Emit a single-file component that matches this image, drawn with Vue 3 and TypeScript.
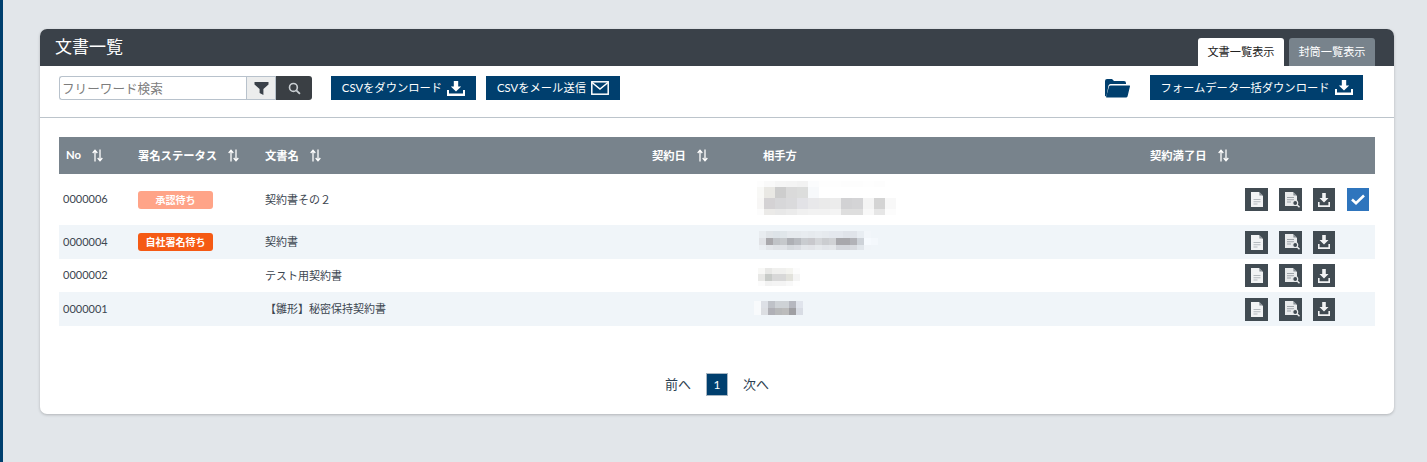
<template>
  <div class="page">
    <div class="side-bar"></div>
    <main class="main">
      <section class="card">
        <header class="card-head">
          <h1 class="title">文書一覧</h1>
          <div class="tabs">
            <a class="tab active">文書一覧表示</a>
            <a class="tab">封筒一覧表示</a>
          </div>
        </header>

        <div class="toolbar">
          <div class="search">
            <input class="search-input" type="text" placeholder="フリーワード検索" />
            <button class="addon filter" aria-label="絞り込み">
              <svg width="15" height="14" viewBox="0 0 15 14"><path d="M.5 1h14v2.400L9.400 8v6L5.600 12V8L.5 3.400z" fill="#3a4149" /></svg>
            </button>
            <button class="addon find" aria-label="検索">
              <svg width="13" height="13" viewBox="0 0 12 12"><circle cx="5" cy="5" r="3.600" fill="none" stroke="#c9ced2" stroke-width="1.500" /><path d="M7.700 7.700 11 11" stroke="#c9ced2" stroke-width="1.700" /></svg>
            </button>
          </div>
          <button class="btn first">
            <span class="btn-label">CSVをダウンロード</span>
            <svg class="btn-icon" width="18" height="15" viewBox="0 0 18 15"><path d="M6.800 0h4.400v5.500h3L9 10.400 3.800 5.500h3z" fill="#fff" /><path d="M0 9h2v3.500h14V9h2v6H0z" fill="#fff" /></svg>
          </button>
          <button class="btn mail">
            <span class="btn-label">CSVをメール送信</span>
            <svg class="btn-icon" width="18" height="14" viewBox="0 0 18 14"><rect x=".8" y=".8" width="16.400" height="12.400" fill="none" stroke="#fff" stroke-width="1.500" /><path d="M1 1.500 9 8l8-6.500" fill="none" stroke="#fff" stroke-width="1.500" /></svg>
          </button>
          <svg class="folder" width="26" height="20" viewBox="0 0 26 20"><path d="M1 18V3q0-2 2-2h5l2 2h10q2 0 2 2v1H6.500q-1.600 0-2 1.600L2.400 18.400z" fill="#003f6e" /><path d="M6.600 7.400H25.400q.8 0 .6.8l-2.400 10q-.3 1.300-1.600 1.300H2.800q-.9 0-.6-.9L5 8.600q.4-1.200 1.600-1.200z" fill="#003f6e" /></svg>
          <button class="btn form">
            <span class="btn-label">フォームデータ一括ダウンロード</span>
            <svg class="btn-icon" width="18" height="15" viewBox="0 0 18 15"><path d="M6.800 0h4.400v5.500h3L9 10.400 3.800 5.500h3z" fill="#fff" /><path d="M0 9h2v3.500h14V9h2v6H0z" fill="#fff" /></svg>
          </button>
        </div>

        <div class="table-wrap">
          <table class="doc-table">
            <colgroup>
              <col v-for="w in colWidths" :key="w.key" :style="{ width: w.px + 'px' }" />
            </colgroup>
            <thead>
              <tr>
                <th v-for="h in headers" :key="h.label">
                  <span class="th-inner">
                    <span class="th-label">{{ h.label }}</span>
                    <svg v-if="h.sort" class="sort" width="11" height="13" viewBox="0 0 11 13"><path d="M3 12.500V1.500M.7 4 3 1.200 5.300 4M8 .5v11M5.700 9 8 11.800 10.300 9" fill="none" stroke="#fff" stroke-width="1.300" /></svg>
                  </span>
                </th>
                <th></th>
              </tr>
            </thead>
            <tbody>
              <tr v-for="(row, i) in rows" :key="row.no" :class="{ alt: i % 2 === 1 }" :style="{ height: row.height + 'px' }">
                <td class="no">{{ row.no }}</td>
                <td class="status">
                  <span v-if="row.status" class="badge" :class="row.statusClass">{{ row.status }}</span>
                </td>
                <td class="name">{{ row.name }}</td>
                <td></td>
                <td class="partner">
                  <div class="mosaic" :style="{ marginTop: row.mosaic.top + 'px', marginLeft: row.mosaic.left + 'px' }">
                    <div v-for="(line, li) in row.mosaic.lines" :key="li" class="mosaic-line" :style="{ height: line.h + 'px' }">
                      <span
                        v-for="(c, ci) in line.cells"
                        :key="ci"
                        :style="{ width: (ci === 0 && row.mosaic.firstW ? row.mosaic.firstW : row.mosaic.cell) + 'px', background: c }"
                      ></span>
                    </div>
                  </div>
                </td>
                <td></td>
                <td class="actions">
                  <div class="icon-row">
                    <a class="icon-btn wide">
                      <svg width="12" height="15" viewBox="0 0 12 15"><path d="M0 0h8l4 4v11H0z" fill="#f2f3f4" /><path d="M8.400 0 12 3.600H8.400z" fill="#8a9197" /><path d="M2.500 7.500h7M2.500 9.800h7M2.500 12h4" stroke="#b4b9bd" stroke-width="1.100" /></svg>
                    </a>
                    <a class="icon-btn wide">
                      <svg class="preview" width="15" height="16" viewBox="0 0 15 16"><path d="M0 0h8l4 4v10H0z" fill="#e9ebec" /><path d="M8.400 0 12 3.600H8.400z" fill="#8a9197" /><path d="M2 5.500h7M2 7.800h7M2 10h4" stroke="#9ea4a9" stroke-width="1.100" /><circle cx="10.200" cy="11" r="2.500" fill="#414b52" stroke="#e9ebec" stroke-width="1.200" /><path d="M12 12.800 14.500 15.300" stroke="#e9ebec" stroke-width="1.500" /></svg>
                    </a>
                    <a class="icon-btn">
                      <svg width="12" height="14" viewBox="0 0 12 14"><path d="M4.200 0h3.600v5H10.500L6 9.500 1.500 5h2.700z" fill="#f2f3f4" /><path d="M0 9h1.600v3.200h8.800V9H12v5H0z" fill="#f2f3f4" /></svg>
                    </a>
                    <a v-if="row.checked" class="icon-btn check">
                      <svg width="14" height="11" viewBox="0 0 14 11"><path d="M1 5.500 5 9.200 13 1.500" fill="none" stroke="#fff" stroke-width="2.600" /></svg>
                    </a>
                  </div>
                </td>
              </tr>
            </tbody>
          </table>
        </div>

        <nav class="pager">
          <a class="pager-link">前へ</a>
          <span class="pager-current">1</span>
          <a class="pager-link">次へ</a>
        </nav>
      </section>
    </main>
  </div>
</template>

<script setup lang="ts">
interface MosaicLine {
  h: number;
  cells: string[];
}
interface Mosaic {
  top: number;
  left: number;
  cell: number;
  firstW?: number;
  lines: MosaicLine[];
}
interface DocRow {
  no: string;
  status: string;
  statusClass: string;
  name: string;
  height: number;
  checked: boolean;
  mosaic: Mosaic;
}

const colWidths = [
  { key: "no", px: 73 },
  { key: "status", px: 127 },
  { key: "name", px: 387 },
  { key: "date", px: 111 },
  { key: "partner", px: 387 },
  { key: "end", px: 96 },
  { key: "actions", px: 135 },
];

const headers = [
  { label: "No", sort: true },
  { label: "署名ステータス", sort: true },
  { label: "文書名", sort: true },
  { label: "契約日", sort: true },
  { label: "相手方", sort: false },
  { label: "契約満了日", sort: true },
];

const rows: DocRow[] = [
  {
    no: "0000006",
    status: "承認待ち",
    statusClass: "pending",
    name: "契約書その２",
    height: 51,
    checked: true,
    mosaic: {
      top: 7,
      left: 0,
      cell: 11,
      firstW: 7,
      lines: [
        { h: 6, cells: ["#fdfdfd", "#f9f9f9", "#f5f5f5", "#f4f4f4", "#f2f2f2", "#fbfcfd", "#fefefe", "#fefefe", "#fdfdfd", "#fdfdfd", "#fefefe", "#fdfdfd", "#fff"] },
        { h: 11, cells: ["#f8f8f6", "#e9e8e4", "#cdcdcd", "#dadada", "#dcdddc", "#f7f9fb", "#fff", "#fff", "#fff", "#fff", "#fff", "#fff", "#fff"] },
        { h: 11, cells: ["#f7f6f5", "#d4d2d4", "#d7d7d9", "#dadadc", "#e2e2e6", "#e8e8ea", "#eaeaea", "#ececec", "#d2d2d4", "#d4d4d6", "#f4f4f4", "#d4d4d4", "#f8f8f8"] },
        { h: 6, cells: ["#fcfcfc", "#ebeae8", "#e8e8e8", "#ebebeb", "#f0f0f0", "#f2f2f2", "#f2f2f2", "#f4f4f4", "#dedede", "#dedede", "#f8f8f8", "#e6e6e6", "#fcfcfc"] },
      ],
    },
  },
  {
    no: "0000004",
    status: "自社署名待ち",
    statusClass: "own",
    name: "契約書",
    height: 34,
    checked: false,
    mosaic: {
      top: 6,
      left: 2,
      cell: 7,
      lines: [
        { h: 7, cells: ["#e8ecf0", "#e0e4e8", "#dde3e8", "#e0e6ea", "#e6eaee", "#e6eaee", "#e8ecf0", "#e6eaee", "#e8ecf0", "#e6eaee", "#e4e8ee", "#e4e8ee", "#e0e4ea", "#e0e4ea", "#e8edf2", "#f2f6fa"] },
        { h: 7, cells: ["#e0e2e6", "#a9a8ac", "#c0c3c7", "#c6c9cc", "#aeb0b5", "#b8bbc0", "#c9ccd0", "#c8c8cc", "#d4d6d9", "#cbcdd0", "#d0d2d5", "#a8a8ac", "#a8a8ac", "#b2b3b8", "#cdd2d8", "#f6fafe", "#f4f8fc"] },
        { h: 5, cells: ["#ebeff3", "#e3e6ea", "#dfe2e6", "#e0e3e7", "#d6dade", "#dadde2", "#e3e6ea", "#e2e4e8", "#e6e9ec", "#e2e5e9", "#e4e7ea", "#d4d7dc", "#d4d7dc", "#d8dbe0", "#e1e6eb", "#f0f4f8"] },
      ],
    },
  },
  {
    no: "0000002",
    status: "",
    statusClass: "",
    name: "テスト用契約書",
    height: 33,
    checked: false,
    mosaic: {
      top: 9,
      left: 1,
      cell: 7,
      lines: [
        { h: 6, cells: ["#f8f8f6", "#e8e8e6", "#f0f0ee", "#f0f0ee", "#f4f4f0", "#fcfcfc"] },
        { h: 7, cells: ["#e8e8e6", "#c8cbc8", "#d8d8d8", "#d8d8d8", "#e2e2dc", "#f4f4f4"] },
        { h: 5, cells: ["#fbfbfb", "#f2f2f2", "#f4f4f4", "#f4f4f4", "#f8f8f8", "#fefefe"] },
      ],
    },
  },
  {
    no: "0000001",
    status: "",
    statusClass: "",
    name: "【雛形】秘密保持契約書",
    height: 34,
    checked: false,
    mosaic: {
      top: 9,
      left: -3,
      cell: 7,
      lines: [
        { h: 7, cells: ["#f8fafc", "#dde0e6", "#bfc2c8", "#ced2d6", "#ced2d6", "#b6b8c0", "#e0e4ec"] },
        { h: 7, cells: ["#f8fafc", "#dcdee2", "#b0b0b6", "#b8b9ba", "#bcbcbc", "#9f9fa3", "#d8dce4"] },
      ],
    },
  },
];
</script>

<style>
html,
body {
  margin: 0;
  background: #e2e6ea;
  overflow: hidden;
}
</style>

<style scoped>
.page {
  display: flex;
  height: 462px;
  font-family: Lato, "Noto Sans CJK JP", sans-serif;
  color: #3c4650;
  font-size: 11px;
}
.side-bar {
  width: 3px;
  flex: none;
  background: #003f6e;
}
.main {
  flex: 1;
  padding: 29px 33px 48px 37px;
  min-width: 0;
}
.card {
  height: 385px;
  box-sizing: border-box;
  background: #fff;
  border-radius: 7px;
  box-shadow: 0 1px 3px rgba(0, 0, 0, 0.22);
  overflow: hidden;
}
.card-head {
  display: flex;
  justify-content: space-between;
  align-items: flex-end;
  height: 37px;
  padding: 0 19px 0 15px;
  background: #3a4149;
}
.title {
  margin: 0;
  align-self: center;
  padding-bottom: 5px;
  font-size: 17px;
  font-weight: 400;
  color: #fff;
}
.tabs {
  display: flex;
  gap: 5px;
}
.tab {
  width: 86px;
  height: 28px;
  box-sizing: border-box;
  padding-bottom: 2px;
  display: flex;
  align-items: center;
  justify-content: center;
  border-radius: 3px 3px 0 0;
  background: #78838c;
  color: #fff;
  font-size: 11.2px;
}
.tab.active {
  background: #fff;
  color: #222;
}
.toolbar {
  display: flex;
  align-items: flex-end;
  height: 52px;
  box-sizing: border-box;
  padding: 9px 31px 17px 19px;
  border-bottom: 1px solid #bcc4cb;
}
.search {
  display: flex;
  height: 24px;
  width: 253px;
}
.search-input {
  width: 187px;
  box-sizing: border-box;
  height: 24px;
  padding: 0 3px 2px 2px;
  border: 1px solid #b8c2cc;
  border-right: none;
  border-radius: 3px 0 0 3px;
  font: 12.6px "Noto Sans CJK JP", sans-serif;
  outline: none;
}
.search-input::placeholder {
  color: #7d7d7d;
  opacity: 1;
}
.addon {
  height: 24px;
  padding: 0;
  border: 1px solid #b8c2cc;
  display: flex;
  align-items: center;
  justify-content: center;
}
.filter {
  width: 30px;
  background: #eceded;
}
.find {
  width: 36px;
  background: #3a3f44;
  border: none;
  border-radius: 0 3px 3px 0;
}
.btn {
  display: flex;
  align-items: center;
  justify-content: center;
  height: 24px;
  padding: 0;
  border: none;
  background: #003f6e;
  color: #fff;
  font: 11.3px Lato, "Noto Sans CJK JP", sans-serif;
}
.btn-label {
  padding-bottom: 2px;
}
.btn-icon {
  margin-left: 5px;
}
.first {
  width: 145px;
  margin-left: 19px;
}
.mail {
  width: 134px;
  margin-left: 10px;
}
.folder {
  margin-left: auto;
  margin-bottom: 2px;
}
.form {
  width: 213px;
  height: 25px;
  margin-left: 20px;
}
.table-wrap {
  padding: 19px 19px 0;
}
.doc-table {
  width: 100%;
  table-layout: fixed;
  border-collapse: collapse;
}
.doc-table th {
  height: 37px;
  padding: 0 0 0 6px;
  background: #78838c;
  color: #fff;
  font-size: 11.3px;
  font-weight: 700;
  text-align: left;
}
.doc-table th:first-child {
  padding-left: 7px;
}
.th-inner {
  display: inline-flex;
  align-items: center;
}
.th-label {
  padding-bottom: 2px;
}
.sort {
  margin-left: 11px;
}
.doc-table td {
  padding: 0 0 0 6px;
}
.doc-table td.no {
  padding: 0 0 2px 4px;
}
.doc-table td.name {
  padding-bottom: 2px;
}
.doc-table tr.alt td {
  background: #f0f5f9;
}
.badge {
  display: flex;
  align-items: center;
  justify-content: center;
  width: 75px;
  height: 18px;
  box-sizing: border-box;
  padding-bottom: 1px;
  border-radius: 3px;
  color: #fff;
  font-size: 10px;
  font-weight: 700;
}
.badge.pending {
  background: #ffa488;
}
.badge.own {
  background: #f55a14;
}
.doc-table td.partner {
  padding: 0;
  vertical-align: top;
}
.mosaic {
  display: flex;
  flex-direction: column;
}
.mosaic-line {
  display: flex;
}
.mosaic-line span {
  flex: none;
  display: block;
  height: 100%;
}
.doc-table td.actions {
  padding-left: 5px;
}
.icon-row {
  display: flex;
  align-items: center;
  gap: 11px;
}
.icon-btn {
  width: 22px;
  height: 23px;
  flex: none;
  display: flex;
  align-items: center;
  justify-content: center;
  background: #414b52;
}
.icon-btn.wide {
  width: 23px;
}
.icon-btn.check {
  margin-left: 1px;
  background: #2f75bd;
}
.preview {
  margin-left: 3px;
}
.pager {
  display: flex;
  justify-content: center;
  align-items: center;
  gap: 15px;
  padding-top: 47px;
  font-size: 13px;
}
.pager-link {
  padding-bottom: 2px;
  color: #2c3e50;
}
.pager-current {
  width: 22px;
  height: 23px;
  box-sizing: border-box;
  display: flex;
  align-items: center;
  justify-content: center;
  background: #003f6e;
  border: 1px solid #a8b6c2;
  color: #fff;
  font-size: 12px;
}
</style>
